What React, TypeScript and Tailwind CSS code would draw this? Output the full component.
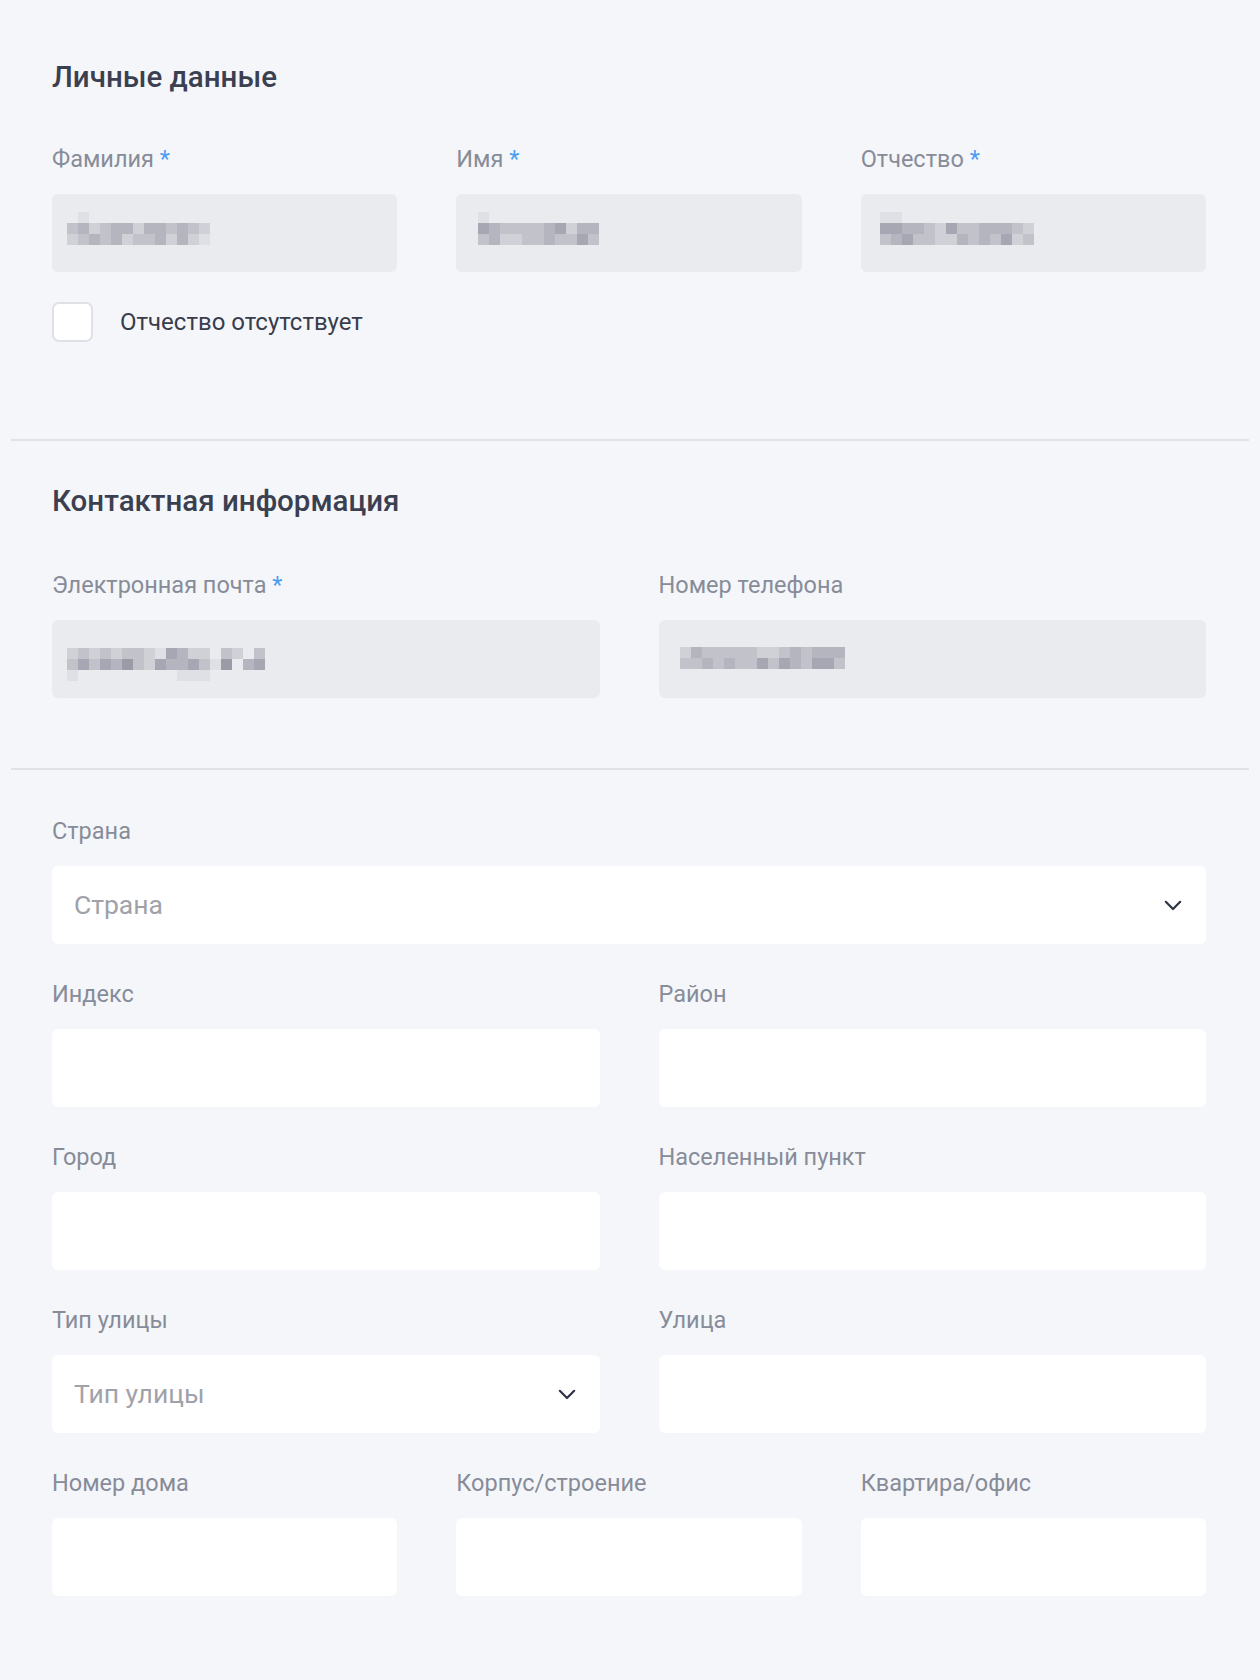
import { ReactNode } from 'react';

const shades: Record<string, string> = {
  '1': '#dfe0e5',
  '2': '#d0d1d7',
  '3': '#c2c3ca',
  '4': '#b4b5be',
  '5': '#a6a7b2',
  '6': '#9a9ba7',
};

function Mosaic({ rows }: { rows: string[] }) {
  const cell = 11;
  const w = Math.max(...rows.map((r) => r.length)) * cell;
  const h = rows.length * cell;
  return (
    <svg width={w} height={h} shapeRendering="crispEdges">
      {rows.flatMap((row, y) =>
        row.split('').map((c, x) =>
          c === '.' ? null : (
            <rect key={`${x}-${y}`} x={x * cell} y={y * cell} width={cell} height={cell} fill={shades[c]} />
          )
        )
      )}
    </svg>
  );
}

function Field({ label, required, children }: { label: string; required?: boolean; children: ReactNode }) {
  return (
    <div className="flex flex-col">
      <div className="mb-[20px] h-[30px] text-[23.5px] leading-[30px] text-[#878c99]">
        {label}
        {required && <span className="text-[#4b9ef2]"> *</span>}
      </div>
      {children}
    </div>
  );
}

// blurred (pixelated) value of a read-only field
function Filled({ rows, pad }: { rows: string[]; pad: string }) {
  return (
    <div className={`h-[78px] rounded-md bg-[#eaebef] ${pad}`}>
      <Mosaic rows={rows} />
    </div>
  );
}

function TextBox() {
  return <div className="h-[78px] rounded-md bg-white" />;
}

function Chevron() {
  return (
    <svg width="18" height="11" viewBox="0 0 18 11" fill="none">
      <path d="M1.8 1.8 L9 9 L16.2 1.8" stroke="#2e3446" strokeWidth="2.2" strokeLinecap="round" strokeLinejoin="round" />
    </svg>
  );
}

function SelectBox({ placeholder }: { placeholder: string }) {
  return (
    <div className="flex h-[78px] items-center justify-between rounded-md bg-white pl-[22px] pr-[24px]">
      <span className="text-[26.5px] text-[#a0a2a9]">{placeholder}</span>
      <Chevron />
    </div>
  );
}

function Heading({ children }: { children: ReactNode }) {
  return <h2 className="h-[36px] text-[29.5px] leading-[36px] font-medium text-[#3b4051]">{children}</h2>;
}

export default function App() {
  return (
    <div className="min-h-[1680px] bg-[#f5f6fa] px-[11px] font-['Roboto',sans-serif]">
      <section className="pl-[41px] pr-[43px] pt-[59px] pb-[97px]">
        <Heading>Личные данные</Heading>
        <div className="mt-[49px] grid grid-cols-3 gap-x-[59px]">
          <Field label="Фамилия" required>
            <Filled pad="pl-[15px] pt-[18px]" rows={['.1...........', '3423442443432', '2343423342421']} />
          </Field>
          <Field label="Имя" required>
            <Filled pad="pl-[22px] pt-[18px]" rows={['1..........', '54333345244', '34223343353']} />
          </Field>
          <Field label="Отчество" required>
            <Filled pad="pl-[19px] pt-[18px]" rows={['11............', '55443253344432', '34533224343523']} />
          </Field>
        </div>
        <label className="mt-[30px] flex items-center gap-[27px]">
          <span className="h-[40px] w-[41px] rounded-[7px] border-2 border-[#dfe1e6] bg-white" />
          <span className="text-[24px] text-[#383d4c]">Отчество отсутствует</span>
        </label>
      </section>

      <div className="h-[2px] bg-[#e0e2e7]" />

      <section className="pl-[41px] pr-[43px] pt-[42px] pb-[70px]">
        <Heading>Контактная информация</Heading>
        <div className="mt-[51px] grid grid-cols-2 gap-x-[59px]">
          <Field label="Электронная почта" required>
            <Filled
              pad="pl-[15px] pt-[28px]"
              rows={['2323233215422.32.3', '353546325445316.45', '1.........111......']}
            />
          </Field>
          <Field label="Номер телефона">
            <Filled pad="pl-[21px] pt-[27px]" rows={['243333322343444', '334343353543553']} />
          </Field>
        </div>
      </section>

      <div className="h-[2px] bg-[#e0e2e7]" />

      <section className="flex flex-col gap-[35px] pl-[41px] pr-[43px] pt-[46px] pb-[83px]">
        <Field label="Страна">
          <SelectBox placeholder="Страна" />
        </Field>
        <div className="grid grid-cols-2 gap-x-[59px]">
          <Field label="Индекс">
            <TextBox />
          </Field>
          <Field label="Район">
            <TextBox />
          </Field>
        </div>
        <div className="grid grid-cols-2 gap-x-[59px]">
          <Field label="Город">
            <TextBox />
          </Field>
          <Field label="Населенный пункт">
            <TextBox />
          </Field>
        </div>
        <div className="grid grid-cols-2 gap-x-[59px]">
          <Field label="Тип улицы">
            <SelectBox placeholder="Тип улицы" />
          </Field>
          <Field label="Улица">
            <TextBox />
          </Field>
        </div>
        <div className="grid grid-cols-3 gap-x-[59px]">
          <Field label="Номер дома">
            <TextBox />
          </Field>
          <Field label="Корпус/строение">
            <TextBox />
          </Field>
          <Field label="Квартира/офис">
            <TextBox />
          </Field>
        </div>
      </section>
    </div>
  );
}
